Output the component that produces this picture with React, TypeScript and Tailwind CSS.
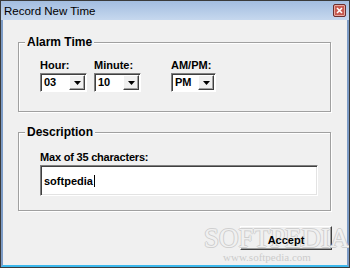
import { ReactNode } from "react";

const FONT = { fontFamily: "'Liberation Sans', Arial, sans-serif" };

function DropArrow() {
  return (
    <div className="flex h-full w-[16px] items-center justify-center border border-t-white border-l-white border-b-[#404040] border-r-[#404040] bg-[#f0f0f0] shadow-[inset_-1px_-1px_0_#a0a0a0]">
      <svg width="7" height="4" viewBox="0 0 7 4">
        <path d="M0 0h7L3.5 4z" fill="#000" />
      </svg>
    </div>
  );
}

function Combo({ value, width }: { value: string; width: string }) {
  return (
    <div
      className={`flex h-[19px] items-stretch border border-t-[#808080] border-l-[#808080] border-b-white border-r-white bg-white p-px shadow-[inset_1px_1px_0_#404040] ${width}`}
    >
      <span className="flex-1 pl-[2px] text-[11px] font-bold leading-[15px] text-black">
        {value}
      </span>
      <DropArrow />
    </div>
  );
}

function Group({ title, children, height }: { title: string; children: ReactNode; height: string }) {
  return (
    <div className={`relative w-[313px] border border-[#a0a0a0] shadow-[inset_1px_1px_0_#fff,1px_1px_0_#fff] ${height}`}>
      <span className="absolute -top-[8px] left-[6px] bg-[#f0f0f0] px-[2px] text-[12px] font-bold leading-[14px] text-black">
        {title}
      </span>
      {children}
    </div>
  );
}

export default function App() {
  return (
    <div
      className="relative flex h-[268px] w-[350px] flex-col overflow-hidden border border-[#3a3a3a] bg-[#f0f0f0]"
      style={FONT}
    >
      <div className="flex h-[19px] items-center justify-between bg-gradient-to-b from-[#a3bde0] to-[#c6d8ee] pl-[3px] pr-[3px]">
        <span className="text-[11.5px] leading-[14px] text-black">Record New Time</span>
        <div className="flex h-[13px] w-[13px] items-center justify-center rounded-[2px] border border-[#6b2f2f] bg-[#c75a50] shadow-[inset_0_0_0_1px_#e8a9a0]">
          <svg width="7" height="7" viewBox="0 0 7 7">
            <path d="M1 1l5 5M6 1l-5 5" stroke="#fff" strokeWidth="1.6" />
          </svg>
        </div>
      </div>

      <div className="flex flex-1 flex-col border-x-2 border-b-2 border-x-[#7d9cc6] border-b-[#3cb8ec] pl-[15px] pt-[22px]">
        <Group title="Alarm Time" height="h-[70px]">
          <div className="flex pl-[21px] pt-[16px]">
            <div className="flex flex-col gap-px">
              <span className="text-[11px] font-bold leading-[13px]">Hour:</span>
              <Combo value="03" width="w-[47px]" />
            </div>
            <div className="ml-[7px] flex flex-col gap-px">
              <span className="text-[11px] font-bold leading-[13px]">Minute:</span>
              <Combo value="10" width="w-[47px]" />
            </div>
            <div className="ml-[30px] flex flex-col gap-px">
              <span className="text-[11px] font-bold leading-[13px]">AM/PM:</span>
              <Combo value="PM" width="w-[45px]" />
            </div>
          </div>
        </Group>

        <div className="mt-[20px]">
          <Group title="Description" height="h-[79px]">
            <div className="flex flex-col gap-px pl-[21px] pt-[18px]">
              <span className="text-[11px] font-bold leading-[13px] tracking-[-0.2px]">Max of 35 characters:</span>
              <div className="h-[31px] w-[278px] border border-t-[#808080] border-l-[#808080] border-b-white border-r-white bg-white px-[3px] py-[2px] shadow-[inset_1px_1px_0_#404040,inset_-1px_-1px_0_#e3e3e3]">
                <span className="text-[11px] font-bold leading-[14px]">softpedia</span>
                <span className="ml-px inline-block h-[12px] w-px translate-y-[2px] bg-black" />
              </div>
            </div>
          </Group>
        </div>

        <div className="mt-[15px] flex w-[314px] justify-end">
          <button className="relative h-[24px] w-[92px] border border-t-white border-l-white border-b-[#404040] border-r-[#404040] bg-[#f0f0f0] shadow-[inset_-1px_-1px_0_#a0a0a0]">
            <span className="relative z-20 text-[11px] font-bold text-black">Accept</span>
          </button>
        </div>
      </div>

      <div
        className="pointer-events-none absolute left-[203px] top-[224px] z-10 text-[27px] leading-[27px] text-[#fafafa]/80 [text-shadow:1px_0_0_#cfcfcf,-1px_0_0_#cfcfcf,0_1px_0_#cfcfcf,0_-1px_0_#cfcfcf]"
        style={{ fontFamily: "'Liberation Serif', serif" }}
      >
        SOFTPEDIA
      </div>
      <div
        className="pointer-events-none absolute left-[222px] top-[250px] z-10 text-[11px] leading-[12px] text-[#cccccc]"
        style={{ fontFamily: "'Liberation Serif', serif" }}
      >
        www.softpedia.com
      </div>
    </div>
  );
}
